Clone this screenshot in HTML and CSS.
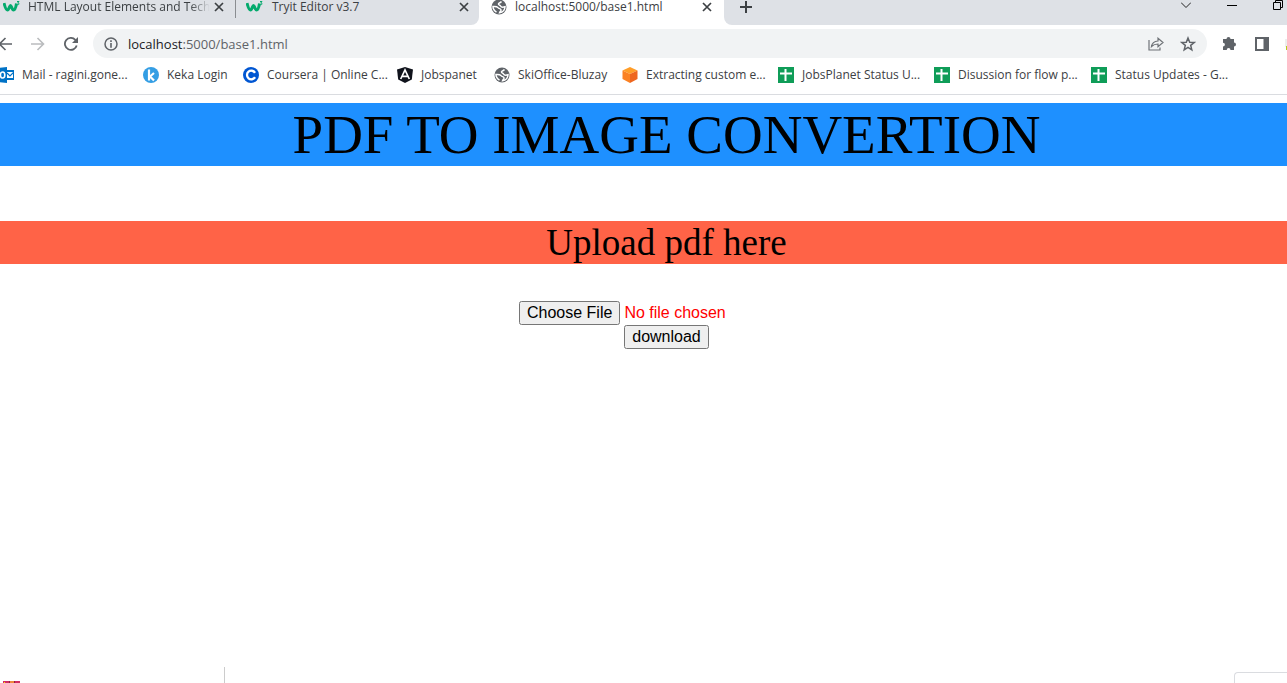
FILE: index.html
```html
<!DOCTYPE html>
<html lang="en">
<head>
<meta charset="utf-8">
<title>localhost:5000/base1.html</title>
<link rel="stylesheet" href="styles.css">
</head>
<body>
<svg class="defs" aria-hidden="true">
  <symbol id="w3" viewBox="0 0 18 14"><path d="M1 3c1 4 2 7 3.500 7S6.500 5.500 7.500 5.500 9 10 10.500 10 13 6.500 13.500 3.500" fill="none" stroke="#04aa6d" stroke-width="3"/><path d="M14 1.500h2L14.800 3c1.800 0 1.600 2-.5 1.800" fill="none" stroke="#04aa6d"/></symbol>
  <symbol id="globe" viewBox="0 0 16 16"><circle cx="8" cy="8" r="7.500" fill="#5f6368"/><path d="M10.500 2.500C9.500 4 8 3.500 7.500 4.800 7.200 6 9 6 9.500 7c.6 1.200 2 1.500 4.500.8-.2 3.200-2.500 5.700-5.500 6 .3-1.300 1.800-1.500 1.500-3C9.700 9.300 8 10 7 8.600 6 7.300 4 7.600 2 7.500c0 2.500 1.500 4.500 3.500 5.700" fill="none" stroke="#fff" stroke-width="1.500"/></symbol>
  <symbol id="close" viewBox="0 0 10 10"><path d="M1 1l8 8M9 1L1 9" stroke="#3c4043" stroke-width="1.700"/></symbol>
  <symbol id="sheet" viewBox="0 0 16 16"><path fill="#0f9d58" d="M0 0h16v16H0z"/><path d="M2 6.500h12M7.500 2v12" stroke="#fff" stroke-width="2"/></symbol>
</svg>

<header class="browser">
  <div class="strip">
    <div class="tabs-back">
      <div class="tab tab-first"><svg class="fav"><use href="#w3"/></svg><span class="tab-title fade">HTML Layout Elements and Techn</span><button class="icon-btn" aria-label="Close tab"><svg class="x"><use href="#close"/></svg></button></div>
      <div class="tab"><svg class="fav"><use href="#w3"/></svg><span class="tab-title">Tryit Editor v3.7</span><button class="icon-btn" aria-label="Close tab"><svg class="x"><use href="#close"/></svg></button></div>
    </div>
    <div class="tab tab-active"><svg class="fav globe"><use href="#globe"/></svg><span class="tab-title">localhost:5000/base1.html</span><button class="icon-btn" aria-label="Close tab"><svg class="x"><use href="#close"/></svg></button></div>
    <div class="strip-end">
      <button class="icon-btn" aria-label="New tab"><svg width="12" height="12" viewBox="0 0 12 12"><path d="M6 0v12M0 6h12" stroke="#3c4043" stroke-width="2"/></svg></button>
      <div class="window-buttons">
        <button class="icon-btn" aria-label="Search tabs"><svg width="10" height="12" viewBox="0 0 10 12"><path d="M0 2.500l5 5 5-5" fill="none" stroke="#222"/></svg></button>
        <button class="icon-btn" aria-label="Minimize"><svg width="10" height="12" viewBox="0 0 10 12"><path d="M0 5.500h10" stroke="#000"/></svg></button>
        <button class="icon-btn" aria-label="Restore"><svg width="10" height="12" viewBox="0 0 10 12"><path d="M.5 2.500h7v7h-7zM2.500 2.500v-2h7v7h-2" fill="none" stroke="#000"/></svg></button>
      </div>
    </div>
  </div>

  <div class="toolbar">
    <div class="nav">
      <button class="icon-btn" aria-label="Back"><svg width="14" height="14" viewBox="0 0 14 14"><path d="M14 7H2M7.500 1L1.500 7l6 6" fill="none" stroke="#5f6368" stroke-width="1.600"/></svg></button>
      <button class="icon-btn" aria-label="Forward"><svg width="14" height="14" viewBox="0 0 14 14"><path d="M0 7h12M6.500 1l6 6-6 6" fill="none" stroke="#babcbe" stroke-width="1.600"/></svg></button>
      <button class="icon-btn" aria-label="Reload"><svg width="14" height="14" viewBox="0 0 14 14"><path d="M12.700 8.500A6 6 0 1 1 11.300 2.800L13 4.500" fill="none" stroke="#5f6368" stroke-width="1.800"/><path d="M14 0v6H8z" fill="#5f6368"/></svg></button>
    </div>
    <div class="address">
      <svg width="14" height="14" viewBox="0 0 14 14"><circle cx="7" cy="7" r="6" fill="none" stroke="#5f6368" stroke-width="1.500"/><path d="M7 3.300v1.600M7 6v4.700" stroke="#5f6368" stroke-width="1.600"/></svg>
      <a class="url" href="#"><span class="host">localhost</span>:5000/base1.html</a>
      <button class="icon-btn" aria-label="Share"><svg width="16" height="14" viewBox="0 0 16 14"><path d="M1 3v10h11v-2.500M3.500 9.500C4 6 6 4.200 10 4V1.200l5 4.300-5 4.200V7C7.500 7 5.500 7.500 3.500 9.500z" fill="none" stroke="#6f7377" stroke-width="1.200"/></svg></button>
      <button class="icon-btn" aria-label="Bookmark this page"><svg width="16" height="16" viewBox="0 0 16 16"><path d="M8 2l1.700 4.200 4.500.3-3.500 2.900 1.100 4.400L8 11.400l-3.800 2.400 1.100-4.400L1.800 6.500l4.500-.3z" fill="none" stroke="#5f6368" stroke-width="1.500"/></svg></button>
    </div>
    <div class="extras">
      <button class="icon-btn" aria-label="Extensions"><svg width="16" height="16" viewBox="0 0 16 16"><path d="M2 3h3.500a2 2 0 1 1 4 0H13v3.500a2 2 0 1 1 0 4V14H9.500a1.900 1.900 0 1 0-3.800 0H2v-3.500a1.900 1.900 0 1 0 0-3.800z" fill="#5f6368"/></svg></button>
      <button class="icon-btn" aria-label="Side panel"><svg width="14" height="14" viewBox="0 0 14 14"><path d="M0 0h14v14H0z" fill="#5f6368"/><path d="M2 2h6.500v10H2z" fill="#fff"/></svg></button>
      <svg class="avatar" viewBox="0 0 2 14"><path d="M0 2h2v8H0z" fill="#eee"/><path d="M1 9h1v4H1z" fill="#b5cc18"/></svg>
    </div>
  </div>

  <nav class="bookmarks" aria-label="Bookmarks">
    <a href="#"><svg viewBox="0 0 16 16"><path d="M8 3h8v10H8z" fill="#0072c6"/><path d="M9 5h6v6H9z" fill="#fff"/><path d="M9 6l3 3 4-4" fill="none" stroke="#0072c6" stroke-width="1.200"/><path d="M0 1l9-1v16l-9-1z" fill="#0072c6"/><ellipse cx="4.600" cy="8" rx="2.200" ry="3" fill="none" stroke="#fff" stroke-width="1.600"/></svg>Mail - ragini.gone...</a>
    <a href="#"><svg viewBox="0 0 16 16"><circle cx="8" cy="8" r="8" fill="#349ee4"/><path d="M6 2.500v11M11 6L7 9.500l4 4" fill="none" stroke="#fff" stroke-width="2.200"/></svg>Keka Login</a>
    <a href="#"><svg viewBox="0 0 16 16"><circle cx="8" cy="8" r="8" fill="#0056d2"/><path d="M12 5.800A4.300 4.300 0 1 0 12 10.200" fill="none" stroke="#fff" stroke-width="2.300"/></svg>Coursera | Online C...</a>
    <a href="#"><svg viewBox="0 0 16 16"><path d="M8 0l8 2.500-1.200 10L8 16l-6.800-3.500L0 2.500z" fill="#10131c"/><path d="M3.700 12L8 3l4.300 9M5.600 9.300h4.800" fill="none" stroke="#fff" stroke-width="1.700"/></svg>Jobspanet</a>
    <a href="#"><svg><use href="#globe"/></svg>SkiOffice-Bluzay</a>
    <a href="#"><svg viewBox="0 0 16 16"><path d="M8 0l7.500 3.500L8 7 .5 3.500z" fill="#ff9d28"/><path d="M.5 3.500L8 7v9L.5 12z" fill="#fb8122"/><path d="M15.500 3.500L8 7v9l7.500-4z" fill="#ee661f"/></svg>Extracting custom e...</a>
    <a href="#"><svg><use href="#sheet"/></svg>JobsPlanet Status U...</a>
    <a href="#"><svg><use href="#sheet"/></svg>Disussion for flow p...</a>
    <a href="#"><svg><use href="#sheet"/></svg>Status Updates - G...</a>
  </nav>
</header>

<main class="page">
  <h1 class="title">PDF TO IMAGE CONVERTION</h1>
  <h2 class="subtitle"><label for="pdf">Upload pdf here</label></h2>
  <form class="upload">
    <input class="file" type="file" id="pdf" accept="application/pdf">
    <button class="download" type="button">download</button>
  </form>
</main>

<footer class="shelf">
  <div class="shelf-item"><svg width="17" height="2" viewBox="0 0 17 2"><path d="M0 0h17v2H0z" fill="#d22c62"/><path d="M6 0h6v2H6z" fill="#f08a3c"/><path d="M6 0h1v2H6zM11 0h1v2h-1z" fill="#8c2440"/><path d="M1 1h1v1H1z" fill="#ffe600"/></svg></div>
  <div class="shelf-button"></div>
</footer>
</body>
</html>
```

FILE: styles.css
```css
* { box-sizing: border-box; }

body {
  display: flex;
  flex-direction: column;
  min-height: 100vh;
  margin: 0;
  overflow: hidden;
  background: #fff;
  color: #000;
  font-family: "Liberation Serif", serif;
}

.defs { position: absolute; width: 0; height: 0; }

svg { display: block; flex: none; }

.icon-btn {
  display: block;
  flex: none;
  padding: 0;
  border: 0;
  background: none;
}

.browser {
  border-bottom: 1px solid #dadce0;
  color: #3c4043;
  font: 12px/16px "Open Sans", sans-serif;
}

/* Tab strip */
.strip { display: flex; height: 25px; }

.tabs-back {
  display: flex;
  background: #dee1e6;
  border-bottom-right-radius: 8px;
}

.tab {
  display: flex;
  align-items: center;
  width: 243px;
  height: 14px;
  padding: 0 10px 0 10px;
}

.tab-first {
  width: 236px;
  height: 18px;
  padding: 0 11px 4px 3px;
  border-right: 1px solid #8a8d91;
}

.tab-active { width: 245px; padding: 0 12px; }

.fav { width: 18px; height: 14px; }
.fav.globe { width: 16px; height: 16px; }
.x { width: 10px; height: 10px; }

.tab-title {
  flex: 1;
  min-width: 0;
  margin: 0 4px 0 8px;
  white-space: nowrap;
}

.fade {
  margin-left: 7px;
  -webkit-mask-image: linear-gradient(to left, transparent, #000 20px);
  mask-image: linear-gradient(to left, transparent, #000 20px);
}

.strip-end {
  display: flex;
  flex: 1;
  align-items: flex-start;
  justify-content: space-between;
  padding: 1px 4px 0 16px;
  background: #dee1e6;
  border-bottom-left-radius: 8px;
}

.window-buttons { display: flex; gap: 36px; margin-top: -1px; }

/* Address bar */
.toolbar { display: flex; align-items: center; padding-top: 4px; }

.nav { display: flex; gap: 19px; margin: 0 15px 0 -2px; }

.address {
  display: flex;
  flex: 1;
  align-items: center;
  gap: 16px;
  height: 29px;
  padding: 0 11px;
  border-radius: 15px;
  background: #f1f3f4;
}

.url {
  flex: 1;
  margin-left: -6px;
  color: #5f6368;
  font-size: 13px;
  text-decoration: none;
}

.host { color: #202124; }

.extras { display: flex; align-items: center; gap: 18px; padding-left: 14px; }
.avatar { width: 2px; height: 14px; margin-left: -2px; }

/* Bookmarks bar */
.bookmarks {
  display: grid;
  grid-template-columns: 145px 100px 154px 97px 128px 156px 156px 157px 1fr;
  margin-left: -2px;
  padding: 9px 0 11px;
}

.bookmarks a {
  display: flex;
  align-items: center;
  gap: 8px;
  color: inherit;
  white-space: nowrap;
  text-decoration: none;
}

.bookmarks svg { width: 16px; height: 16px; }

.page { flex: 1; padding-top: 8px; text-align: center; }

.title, .subtitle { margin: 0; padding-left: 46px; font-weight: 400; }

.title {
  margin-bottom: 55px;
  background: #1e90ff;
  font-size: 55px;
  line-height: 63px;
}

.subtitle {
  margin-bottom: 37px;
  background: #ff6347;
  font-size: 37px;
  line-height: 43px;
}

.upload {
  display: flex;
  flex-direction: column;
  align-items: center;
  padding-left: 46px;
}

.file, .download { height: 24px; font: 16px "Liberation Sans", sans-serif; }
.file { width: 295px; color: #f00; }

/* Download shelf */
.shelf { display: flex; justify-content: space-between; height: 16px; }

.shelf-item {
  display: flex;
  align-items: flex-end;
  width: 225px;
  padding-left: 3px;
  border-right: 1px solid #ccc;
}

.shelf-button {
  align-self: flex-end;
  width: 53px;
  height: 11px;
  border: 1px solid #dadce0;
  border-width: 1px 0 0 1px;
  border-top-left-radius: 4px;
}
```
